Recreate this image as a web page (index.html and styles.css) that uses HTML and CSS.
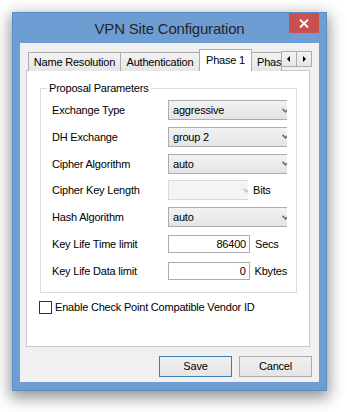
FILE: index.html
```html
<!DOCTYPE html>
<html>
<head>
<meta charset="utf-8">
<title>VPN Site Configuration</title>
<link rel="stylesheet" href="styles.css">
</head>
<body>
<div class="window">
  <div class="titlebar">
    <span></span>
    <div class="title">VPN Site Configuration</div>
    <div class="close-wrap">
      <div class="close"><svg width="10" height="9" viewBox="0 0 10 9"><path d="M1 0.5 L9 8.5 M9 0.5 L1 8.5" stroke="#fff" stroke-width="1.8" fill="none"/></svg></div>
    </div>
  </div>
  <div class="client">
    <div class="tabs">
      <div class="tab tab-name">Name Resolution</div>
      <div class="tab tab-auth">Authentication</div>
      <div class="tab tab-active">Phase 1</div>
      <div class="tab tab-clip">Phase 2</div>
      <div class="scroller">
        <div class="sbtn"><svg width="4" height="6" viewBox="0 0 4 6"><path d="M3 0 L0 3 L3 6 Z" fill="#000"/></svg></div>
        <div class="sbtn"><svg width="4" height="6" viewBox="0 0 4 6"><path d="M1 0 L4 3 L1 6 Z" fill="#000"/></svg></div>
      </div>
    </div>
    <div class="panel">
      <fieldset class="group">
        <legend>Proposal Parameters</legend>
        <div class="form">
          <div class="lbl">Exchange Type</div>
          <div class="combo"><span>aggressive</span><svg class="chev" width="7" height="5" viewBox="0 0 7 5"><path d="M0.5 0.8 L3.5 3.8 L6.5 0.8" stroke="#6e6e6e" stroke-width="1.6" fill="none"/></svg></div>

          <div class="lbl">DH Exchange</div>
          <div class="combo"><span>group 2</span><svg class="chev" width="7" height="5" viewBox="0 0 7 5"><path d="M0.5 0.8 L3.5 3.8 L6.5 0.8" stroke="#6e6e6e" stroke-width="1.6" fill="none"/></svg></div>

          <div class="lbl">Cipher Algorithm</div>
          <div class="combo"><span>auto</span><svg class="chev" width="7" height="5" viewBox="0 0 7 5"><path d="M0.5 0.8 L3.5 3.8 L6.5 0.8" stroke="#6e6e6e" stroke-width="1.6" fill="none"/></svg></div>

          <div class="lbl">Cipher Key Length</div>
          <div class="withunit">
            <div class="combo disabled"><span></span><svg class="chev" width="7" height="5" viewBox="0 0 7 5"><path d="M0.5 0.8 L3.5 3.8 L6.5 0.8" stroke="#c4c4c4" stroke-width="1.6" fill="none"/></svg></div>
            <span class="unit">Bits</span>
          </div>

          <div class="lbl">Hash Algorithm</div>
          <div class="combo"><span>auto</span><svg class="chev" width="7" height="5" viewBox="0 0 7 5"><path d="M0.5 0.8 L3.5 3.8 L6.5 0.8" stroke="#6e6e6e" stroke-width="1.6" fill="none"/></svg></div>

          <div class="lbl">Key Life Time limit</div>
          <div class="withunit">
            <div class="textbox">86400</div>
            <span class="unit">Secs</span>
          </div>

          <div class="lbl">Key Life Data limit</div>
          <div class="withunit">
            <div class="textbox">0</div>
            <span class="unit">Kbytes</span>
          </div>
        </div>
      </fieldset>
      <div class="check"><span class="box"></span><span>Enable Check Point Compatible Vendor ID</span></div>
    </div>
    <div class="buttons">
      <div class="btn default">Save</div>
      <div class="btn">Cancel</div>
    </div>
  </div>
</div>
</body>
</html>
```
FILE: styles.css
```css
html, body {
  margin: 0;
  padding: 0;
  background: #ffffff;
}
body {
  width: 347px;
  height: 412px;
  overflow: hidden;
  font-family: "Liberation Sans", Arial, sans-serif;
  font-size: 11px;
  letter-spacing: -0.2px;
  color: #000;
}
.window {
  box-sizing: border-box;
  margin: 12px 0 0 12px;
  width: 315px;
  height: 379px;
  background: #6d9dd3;
  border: 1px solid #5b8cc6;
  padding: 0 7px 8px 7px;
  box-shadow: 0 5px 14px 2px rgba(0, 0, 0, 0.42);
}
.titlebar {
  height: 30px;
  display: grid;
  grid-template-columns: 1fr auto 1fr;
}
.title {
  align-self: center;
  font-size: 15px;
  letter-spacing: -0.2px;
  color: #262626;
  line-height: 18px;
  padding-top: 1px;
  white-space: nowrap;
}
.close-wrap {
  display: flex;
  justify-content: flex-end;
  align-items: flex-start;
}
.close {
  width: 30px;
  height: 20px;
  background: #c75050;
  display: flex;
  align-items: center;
  justify-content: center;
}
.client {
  box-sizing: border-box;
  height: 339px;
  background: #f0f0f0;
  padding: 6px 7px 5px 6px;
  display: flex;
  flex-direction: column;
}
.tabs {
  height: 22px;
  display: flex;
  align-items: flex-end;
  padding-left: 2px;
  margin-bottom: -1px;
  position: relative;
  z-index: 1;
}
.tab {
  box-sizing: border-box;
  height: 19px;
  border: 1px solid #acacac;
  border-bottom: none;
  background: linear-gradient(#f2f2f2, #e6e6e6);
  line-height: 18px;
  text-align: center;
  white-space: nowrap;
  overflow: hidden;
  margin-left: -1px;
}
.tab-name { width: 93px; margin-left: 0; }
.tab-auth { width: 80px; }
.tab-active {
  width: 53px;
  height: 22px;
  background: #fff;
  line-height: 20px;
  position: relative;
  z-index: 2;
}
.tab-clip {
  width: 31px;
  text-align: left;
  padding-left: 5px;
}
.scroller {
  align-self: flex-start;
  margin-top: 2px;
  margin-left: -1px;
  display: flex;
  position: relative;
  z-index: 3;
}
.sbtn {
  box-sizing: border-box;
  width: 16px;
  height: 16px;
  border: 1px solid #acacac;
  background: linear-gradient(#f3f3f3, #e6e6e6);
  display: flex;
  align-items: center;
  justify-content: center;
}
.sbtn + .sbtn { margin-left: -1px; }
.panel {
  box-sizing: border-box;
  height: 277px;
  margin-right: 2px;
  background: #fff;
  border: 1px solid #c8c8c8;
  padding: 10px 12px 0 13px;
}
.group {
  margin: 0;
  padding: 5px 6px 11px 6px;
  border: 1px solid #dcdcdc;
  min-width: 0;
}
.group legend {
  padding: 0 2px;
  line-height: 14px;
}
.form {
  margin-left: 5px;
  display: grid;
  grid-template-columns: 116px 119px;
  grid-auto-rows: 20px;
  row-gap: 6.8px;
}
.lbl {
  line-height: 20px;
  white-space: nowrap;
}
.combo {
  box-sizing: border-box;
  height: 20px;
  border: 1px solid #acacac;
  border-right: none;
  background: linear-gradient(#f2f2f2, #e4e4e4);
  display: flex;
  align-items: center;
  justify-content: space-between;
  padding-left: 4px;
  overflow: hidden;
}
.chev {
  margin-right: -2px;
  flex: none;
}
.combo.disabled {
  width: 80px;
  border: 1px solid #d9d9d9;
  border-right: none;
  background: #f4f4f4;
}
.withunit {
  display: flex;
  align-items: center;
  gap: 5px;
}
.textbox {
  box-sizing: border-box;
  width: 82px;
  height: 18px;
  border: 1px solid #acacac;
  background: #fff;
  text-align: right;
  padding-right: 3px;
  line-height: 16px;
}
.unit {
  white-space: nowrap;
}
.check {
  margin-top: 8px;
  margin-left: -1px;
  display: flex;
  align-items: center;
  gap: 3px;
  white-space: nowrap;
}
.box {
  box-sizing: border-box;
  width: 13px;
  height: 13px;
  border: 1px solid #333;
  background: #fff;
}
.buttons {
  margin-top: 9px;
  display: flex;
  justify-content: flex-end;
  gap: 7px;
}
.btn {
  box-sizing: border-box;
  width: 73px;
  height: 21px;
  border: 1px solid #acacac;
  background: linear-gradient(#f0f0f0, #e5e5e5);
  text-align: center;
  line-height: 19px;
}
.btn.default {
  border-color: #3c7fb1;
}
```
